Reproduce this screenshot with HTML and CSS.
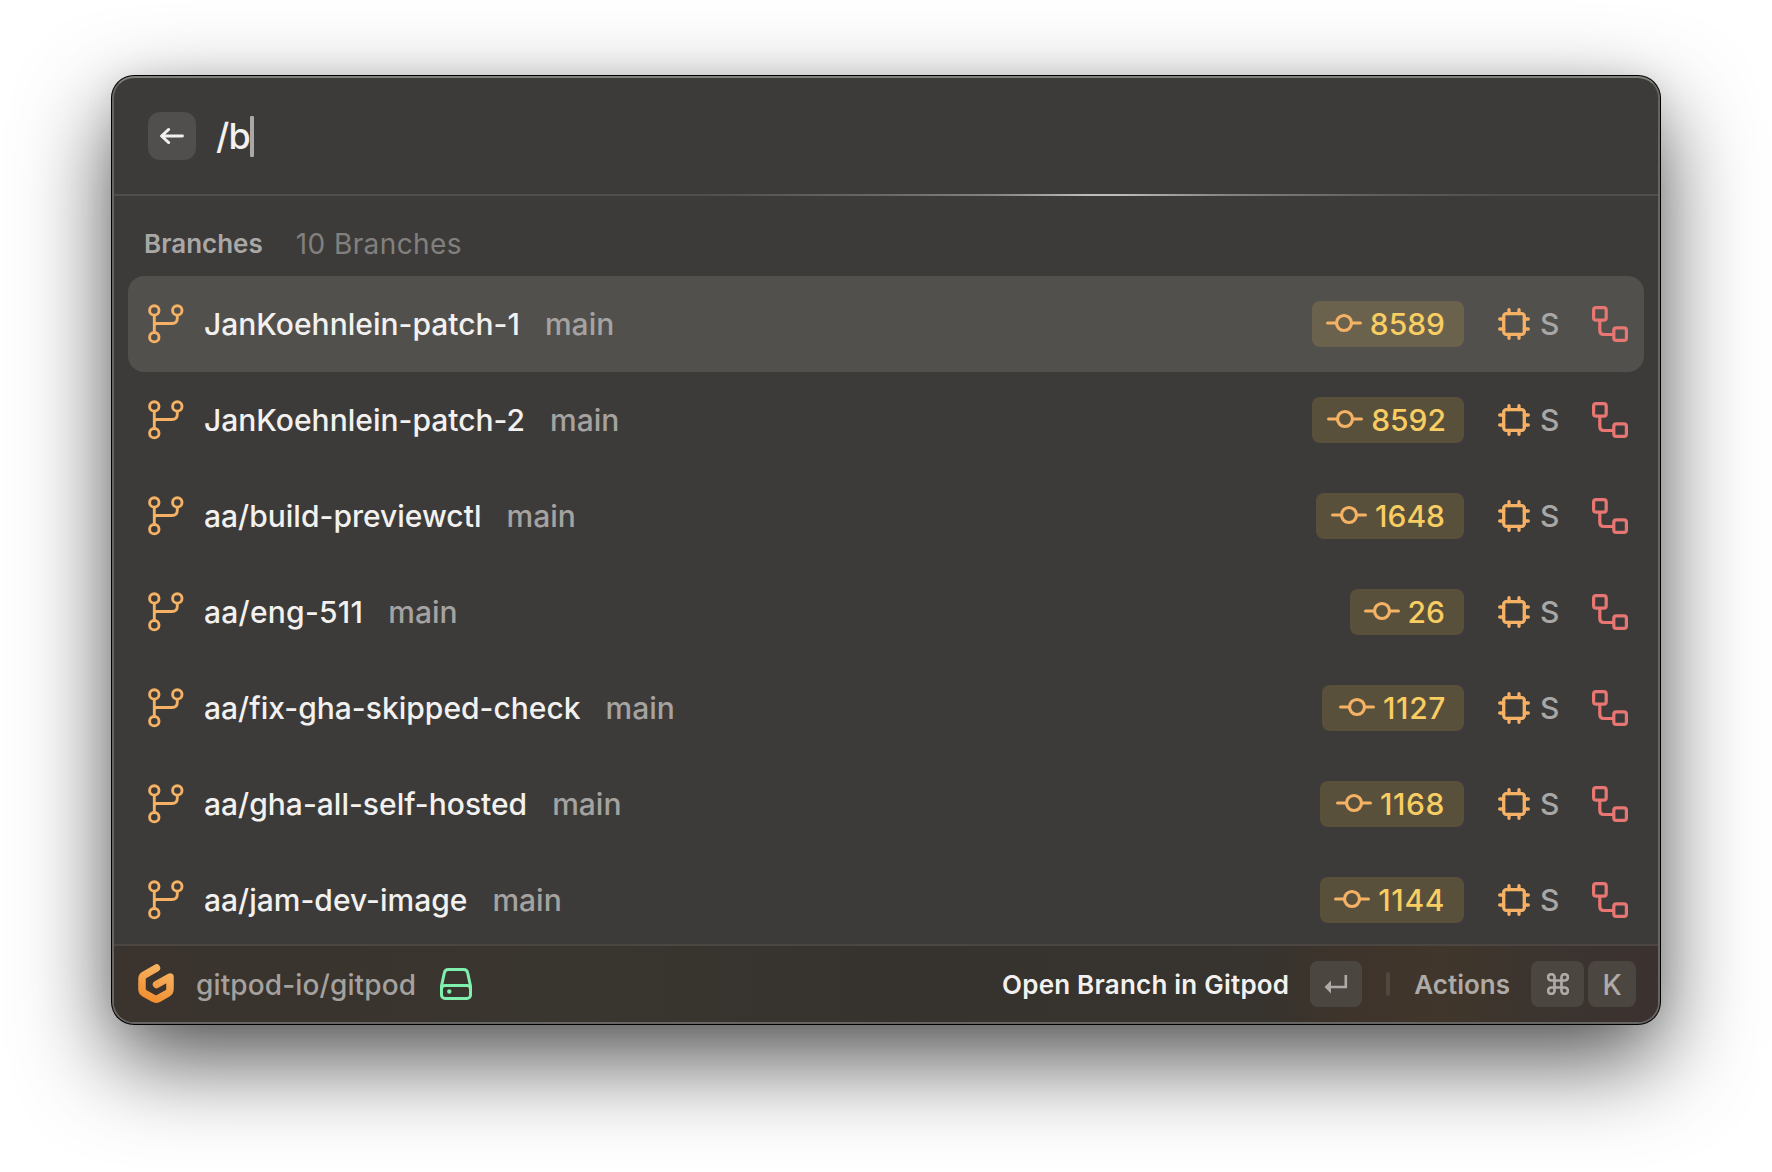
FILE: index.html
```html
<!DOCTYPE html>
<html lang="en">
<head>
<meta charset="utf-8">
<title>Branches</title>
<link rel="stylesheet" href="styles.css">
</head>
<body>
<svg width="0" height="0" class="sprite">
  <symbol id="branch" viewBox="0 0 36 40" fill="none" stroke="currentColor" stroke-width="2.9">
    <circle cx="6.3" cy="6.4" r="4.7"/><circle cx="29.3" cy="6.4" r="4.7"/><circle cx="6.3" cy="33.2" r="4.7"/>
    <path d="M6.3 11.1v17.4M6.3 22c0-1.300 .9-2.500 2.600-2.500H24c3.600 0 5.300-2 5.300-5.300v-3.100"/>
  </symbol>
  <symbol id="commit" viewBox="0 0 36 36" fill="none" stroke="currentColor" stroke-width="3.2" stroke-linecap="round">
    <circle cx="18" cy="18" r="7.500"/><path d="M1.600 18h9M25.500 18h8.900"/>
  </symbol>
  <symbol id="chip" viewBox="0 0 32 32" fill="none" stroke="currentColor" stroke-width="3.3" stroke-linecap="round">
    <rect x="5.700" y="5.700" width="20.600" height="20.600" rx="2.500"/>
    <path d="M11 1.700v4M21 1.700v4M11 26.300v4M21 26.300v4M1.700 11h4M1.700 21h4M26.300 11h4M26.300 21h4"/>
  </symbol>
  <symbol id="flow" viewBox="0 0 36 36" fill="none" stroke="currentColor" stroke-width="3.2">
    <rect x="1.600" y="1.600" width="12.600" height="12.600" rx="2.500"/><rect x="21.800" y="21.800" width="12.600" height="12.600" rx="2.500"/>
    <path d="M7.800 14v10.500q0 4 4 4H22"/>
  </symbol>
</svg>
<main class="window">
  <header class="search">
    <span class="back"><svg width="24" height="18" viewBox="0 0 24 18" fill="none" stroke="currentColor" stroke-width="2.800" stroke-linecap="round" stroke-linejoin="round"><path d="M22.500 9H2M8.700 2.400L1.500 9l7.200 6.600"/></svg></span>
    <span class="query">/b</span><span class="caret"></span>
  </header>
  <section class="list">
    <h2 class="heading">Branches <span class="count">10 Branches</span></h2>
    <div class="row selected"><svg class="branch"><use href="#branch"/></svg><span class="name">JanKoehnlein-patch-1</span><span class="base">main</span><span class="badge wide"><svg class="commit"><use href="#commit"/></svg>8589</span><svg class="chip"><use href="#chip"/></svg><span class="size">S</span><svg class="flow"><use href="#flow"/></svg></div>
    <div class="row"><svg class="branch"><use href="#branch"/></svg><span class="name">JanKoehnlein-patch-2</span><span class="base">main</span><span class="badge wide tail"><svg class="commit"><use href="#commit"/></svg>8592</span><svg class="chip"><use href="#chip"/></svg><span class="size">S</span><svg class="flow"><use href="#flow"/></svg></div>
    <div class="row"><svg class="branch"><use href="#branch"/></svg><span class="name">aa/build-previewctl</span><span class="base">main</span><span class="badge"><svg class="commit"><use href="#commit"/></svg>1648</span><svg class="chip"><use href="#chip"/></svg><span class="size">S</span><svg class="flow"><use href="#flow"/></svg></div>
    <div class="row"><svg class="branch"><use href="#branch"/></svg><span class="name loose">aa/eng-511</span><span class="base">main</span><span class="badge short"><svg class="commit"><use href="#commit"/></svg>26</span><svg class="chip"><use href="#chip"/></svg><span class="size">S</span><svg class="flow"><use href="#flow"/></svg></div>
    <div class="row"><svg class="branch"><use href="#branch"/></svg><span class="name">aa/fix-gha-skipped-check</span><span class="base">main</span><span class="badge narrow"><svg class="commit"><use href="#commit"/></svg>1127</span><svg class="chip"><use href="#chip"/></svg><span class="size">S</span><svg class="flow"><use href="#flow"/></svg></div>
    <div class="row"><svg class="branch"><use href="#branch"/></svg><span class="name">aa/gha-all-self-hosted</span><span class="base">main</span><span class="badge medium"><svg class="commit"><use href="#commit"/></svg>1168</span><svg class="chip"><use href="#chip"/></svg><span class="size">S</span><svg class="flow"><use href="#flow"/></svg></div>
    <div class="row"><svg class="branch"><use href="#branch"/></svg><span class="name">aa/jam-dev-image</span><span class="base">main</span><span class="badge medium"><svg class="commit"><use href="#commit"/></svg>1144</span><svg class="chip"><use href="#chip"/></svg><span class="size">S</span><svg class="flow"><use href="#flow"/></svg></div>
  </section>
  <footer class="bar">
    <svg class="logo" width="36" height="40" viewBox="0 0 36 40" fill="none">
      <defs><linearGradient id="orange" x1="26" y1="2" x2="12" y2="38" gradientUnits="userSpaceOnUse"><stop stop-color="#f6b565"/><stop offset="1" stop-color="#f28d2f"/></linearGradient></defs>
      <path d="M18.500 4L6.300 10.900Q4 12.200 4 14.800v10.500q0 2.600 2.300 3.900l9.500 5.400q2.200 1.200 4.400 0l9.500-5.400q2.300-1.300 2.300-3.900V13L18.500 20.500" stroke="url(#orange)" stroke-width="7.500" stroke-linecap="round" stroke-linejoin="round"/>
    </svg>
    <span class="repo">gitpod-io/gitpod</span>
    <svg class="drive" width="32" height="32" viewBox="0 0 32 32" fill="none" stroke="currentColor" stroke-width="3"><path d="M1.500 21V18L4.300 5q.6-3.500 4-3.500h15.400q3.400 0 4 3.500l2.800 13v3"/><rect x="1.500" y="17.500" width="29" height="13" rx="3.500"/><circle cx="9.300" cy="23.500" r="2.200" fill="currentColor" stroke="none"/></svg>
    <span class="primary">Open Branch in Gitpod</span>
    <span class="key enter"><svg width="24" height="20" viewBox="0 0 24 20" fill="none"><path d="M21.800 1v12H6" stroke="currentColor" stroke-width="2.600"/><path d="M.5 13L7 6.500v13z" fill="currentColor"/></svg></span>
    <span class="sep"></span>
    <span class="actions">Actions</span>
    <span class="key cmd"><svg width="22" height="22" viewBox="0 0 22 22" fill="none" stroke="currentColor" stroke-width="2.700"><path d="M7.500 7.500h7v7h-7zM7.500 7.500H4.600A3.200 3.200 0 1 1 7.500 4.600zM14.500 7.500V4.600a3.200 3.200 0 1 1 2.900 2.900zM14.500 14.500h2.900a3.200 3.200 0 1 1-2.900 2.900zM7.500 14.500v2.900a3.200 3.200 0 1 1-2.900-2.900z"/></svg></span>
    <span class="key k">K</span>
  </footer>
</main>
</body>
</html>
```
FILE: styles.css
```css
* { box-sizing: border-box; }
body { margin: 0; height: 1172px; padding: 76px 112px; overflow: hidden; background: #fff; font-family: Inter, "Liberation Sans", sans-serif; font-size: 30px; font-weight: 500; line-height: 36px; color: #f2f1f0; }
svg { display: block; flex: none; }
.sprite { position: absolute; }
.window { width: 1548px; height: 948px; border: 2px solid #666563; border-top-color: #80807c; border-radius: 22px; background: #3d3b39; overflow: hidden; display: flex; flex-direction: column; box-shadow: 0 0 0 1px #000, 0 36px 92px rgba(0,0,0,.68), 0 0 30px rgba(0,0,0,.08); }
.search { flex: none; height: 118px; padding: 34px; display: flex; align-items: flex-start; border-bottom: 2px solid; border-image: linear-gradient(90deg, #4f4e4c 38%, #6a6967 50%, #858482 57%, #bebdbb 63%, #bebdbb 65%, #858482 72%, #5f5e5c 82%, #4f4e4c 90%) 1; }
.back { width: 48px; height: 48px; border-radius: 12px; background: #504f4d; display: flex; align-items: center; justify-content: center; }
.query { margin-left: 20px; width: 34px; font-size: 36px; line-height: 48px; letter-spacing: -.7px; }
.caret { width: 4px; height: 41px; margin-top: 4px; border-radius: 1px; background: #aaa8a6; }
.list { flex: 1; min-height: 0; overflow: hidden; padding: 0 14px; }
.heading { margin: 0; height: 80px; padding: 30px 16px 0; font-size: 26px; font-weight: 600; line-height: 36px; color: #a9a8a6; display: flex; gap: 33px; }
.count { font-size: 28px; font-weight: 400; color: #82807e; letter-spacing: .4px; }
.row { height: 96px; padding: 0 16px 0 20px; border-radius: 16px; display: flex; align-items: center; }
.selected { background: #52504d; }
.branch { width: 36px; height: 40px; margin-right: 20px; color: #f5b264; }
.name { letter-spacing: .01px; }
.name.loose { letter-spacing: .25px; }
.base { margin-left: 25px; color: #a5a3a1; }
.badge { margin-left: auto; width: 148px; height: 46px; padding-right: 19px; border-radius: 8px; background: #59503c; color: #f8cd62; display: flex; align-items: center; justify-content: flex-end; }
.badge.wide { width: 152px; }
.badge.tail { padding-right: 18px; }
.badge.medium { width: 144px; letter-spacing: .6px; }
.badge.narrow { width: 142px; letter-spacing: .6px; padding-right: 18px; }
.badge.short { width: 114px; }
.selected .badge { background: #6b624e; }
.commit { width: 36px; height: 36px; margin-right: 8px; color: #f5b264; position: relative; top: -1px; }
.chip { width: 32px; height: 32px; margin-left: 34px; color: #f5b264; }
.size { margin-left: 10px; width: 20px; color: #a9a7a5; }
.flow { width: 36px; height: 36px; margin-left: 32px; color: #e87773; }
.bar { flex: none; height: 78px; border-top: 2px solid #4b4642; padding: 0 22px 0 24px; display: flex; align-items: center; font-size: 26px; background: linear-gradient(90deg, #3a332e, #39352f 30%, #36322d 50%, #37332e 74%, #3f342b 81%, #40362b 86%, #3b342f 92%, #3b3230); }
.repo { margin-left: 22px; padding-top: 2px; width: 219px; font-size: 28px; letter-spacing: .12px; color: #a5a19e; white-space: nowrap; }
.drive { margin-left: 25px; color: #7ff0ae; }
.primary { margin-left: auto; padding-top: 1px; font-weight: 600; letter-spacing: .22px; }
.key { height: 46px; border-radius: 8px; background: #4c4641; color: #aeaaa7; display: flex; align-items: center; justify-content: center; }
.enter { width: 52px; margin-left: 21px; }
.sep { width: 4px; height: 24px; margin: 0 24px; border-radius: 2px; background: #50483d; }
.actions { padding-top: 1px; color: #aeaaa7; font-weight: 600; }
.cmd { width: 53px; margin-left: 21px; }
.k { width: 48px; margin-left: 4px; padding-top: 2px; font-size: 28px; }
```
